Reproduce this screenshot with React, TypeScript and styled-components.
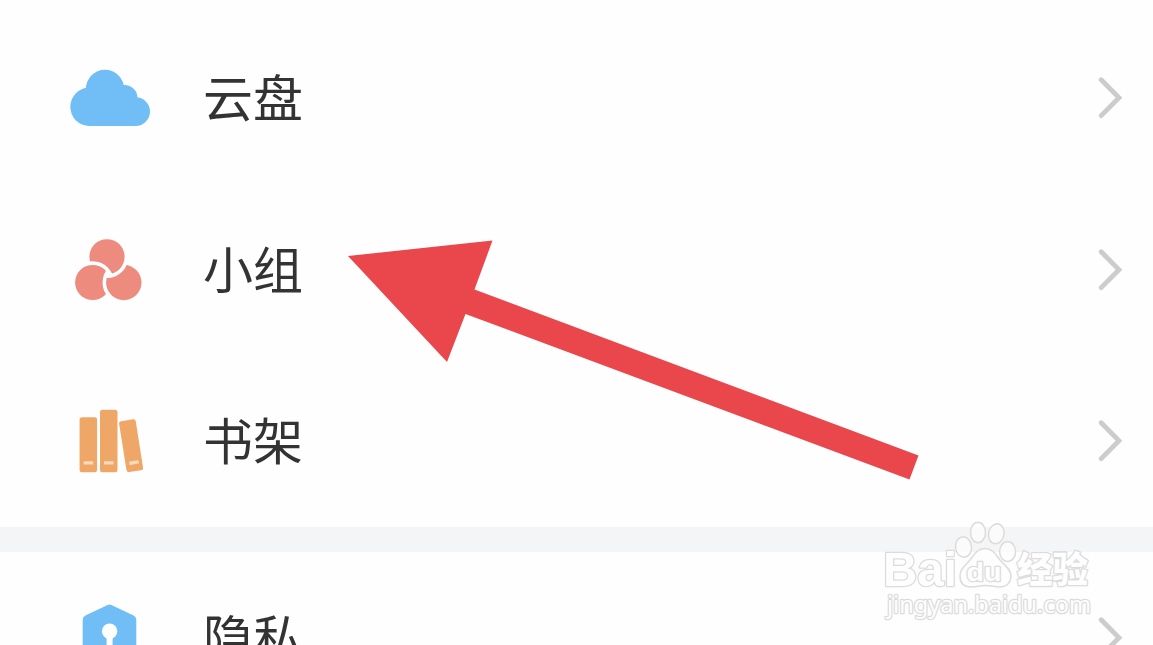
import { ReactNode } from 'react';
import styled, { createGlobalStyle } from 'styled-components';

const GlobalStyle = createGlobalStyle`
    body {
        margin: 0;
        background: #fefefe;
        overflow: hidden;
    }
`;

const Screen = styled.div`
    position: relative;
    box-sizing: border-box;
    height: 645px;
    padding-top: 12.5px;
    overflow: hidden;
    background: #fefefe;
    font-family: 'Noto Sans CJK SC', sans-serif;
`;

const Section = styled.section`
    display: flex;
    flex-direction: column;
`;

const Divider = styled.div`
    height: 25px;
    background: #f4f5f7;
`;

const Row = styled.div`
    display: flex;
    align-items: center;
    height: 171.5px;
    padding: 0 29px 0 60px;
    .label {
        flex: 1;
        margin-left: 43px;
        padding-bottom: 6px;
        color: #333;
        font-size: 50px;
        line-height: 72px;
    }
`;

const RowIcon = styled.svg`
    display: block;
    flex: none;
    width: 100px;
    height: 76.5px;
`;

const Chevron = styled.svg`
    display: block;
    flex: none;
    width: 26px;
    height: 44px;
`;

const Overlay = styled.svg`
    position: absolute;
    top: 0;
    left: 0;
    pointer-events: none;
`;

const WatermarkGroup = styled.g`
    fill: #fefefe;
    stroke: #dcdcdc;
    stroke-width: 2.6px;
    stroke-linejoin: round;
    paint-order: stroke;
    .latin {
        font: bold 49px 'Liberation Sans', sans-serif;
    }
    .du {
        font: bold 26px 'Liberation Sans', sans-serif;
    }
    .cjk {
        font: 900 36px 'Noto Sans CJK SC', sans-serif;
    }
    .url {
        font: 23.5px 'Noto Sans', sans-serif;
    }
`;

const CloudIcon = () => (
    <RowIcon viewBox="0 0 100 76.5" fill="#70bef5">
        <circle cx="29.5" cy="46.8" r="19.2" />
        <circle cx="45" cy="29" r="19.2" />
        <circle cx="64.5" cy="38" r="13" />
        <circle cx="75.6" cy="51.6" r="14.4" />
        <path d="M29.5 34H66L75.6 42V66H29.5Z" />
    </RowIcon>
);

const GroupIcon = () => (
    <RowIcon viewBox="0 0 100 76.5" fill="#ee8b7f">
        <defs>
            <mask id="cut-left">
                <rect width="100" height="77" fill="#fff" />
                <circle cx="32.7" cy="50.5" r="21.3" fill="#000" />
            </mask>
            <mask id="cut-top">
                <rect width="100" height="77" fill="#fff" />
                <circle cx="47" cy="24.8" r="21.3" fill="#000" />
            </mask>
            <mask id="cut-right">
                <rect width="100" height="77" fill="#fff" />
                <circle cx="63.8" cy="50.5" r="21.3" fill="#000" />
            </mask>
        </defs>
        <circle cx="47" cy="24.8" r="17.6" mask="url(#cut-left)" />
        <circle cx="63.8" cy="50.5" r="17.7" mask="url(#cut-top)" />
        <circle cx="32.7" cy="50.5" r="17.6" mask="url(#cut-right)" />
    </RowIcon>
);

const BooksIcon = () => (
    <RowIcon viewBox="0 0 100 76.5" fill="#efa768">
        <rect x="19.6" y="14.2" width="17.5" height="55" rx="2.5" />
        <rect x="40" y="6.8" width="17.5" height="62.4" rx="2.5" />
        <rect x="62.7" y="16.9" width="16.8" height="51.6" rx="2.5" transform="rotate(-9 71.1 42.7)" />
        <g fill="#f8d9bc">
            <rect x="23.6" y="58.2" width="9.6" height="3.4" rx="0.6" />
            <rect x="44" y="58.2" width="9.6" height="3.4" rx="0.6" />
            <rect x="69.2" y="57.9" width="9.6" height="3.4" rx="0.6" transform="rotate(-9 74 59.6)" />
        </g>
    </RowIcon>
);

const PrivacyIcon = () => (
    <RowIcon viewBox="0 0 100 76.5">
        <path
            fill="#70bef5"
            d="M47.6 5Q49.5 4 51.4 5L73.6 15.6Q76.3 17 76.3 20V55Q76.3 58 73.6 59.4L51.4 71Q49.5 72 47.6 71L25.4 59.4Q22.7 58 22.7 55V20Q22.7 17 25.4 15.6Z"
        />
        <circle cx="49.6" cy="31.3" r="7.7" fill="#fefefe" />
        <rect x="46.6" y="34" width="6" height="20" fill="#fefefe" />
    </RowIcon>
);

const MenuRow = (props: { icon: ReactNode; label: string }) => {
    const { icon, label } = props;
    return (
        <Row>
            {icon}
            <span className="label">{label}</span>
            <Chevron viewBox="0 0 26 44" fill="none" stroke="#ccc" strokeWidth="4.8" strokeLinecap="round">
                <path d="M3.2 3.8L21 21.7L3.2 39.6" />
            </Chevron>
        </Row>
    );
};

const Watermark = () => (
    <WatermarkGroup>
        <text className="latin" x="883" y="586" textLength="74" lengthAdjust="spacingAndGlyphs">
            Bai
        </text>
        <g fillOpacity="0.7" strokeWidth="1.5" style={{ paintOrder: 'normal' }}>
            <ellipse cx="963.5" cy="547" rx="8" ry="10.2" transform="rotate(-8 963.5 547)" />
            <ellipse cx="978" cy="532.5" rx="7.5" ry="10.3" />
            <ellipse cx="996.3" cy="533.8" rx="7.7" ry="10" transform="rotate(12 996.3 533.8)" />
            <ellipse cx="1007.6" cy="551.5" rx="8" ry="10" />
            <path
                fillOpacity="1"
                d="M985 548.5C977 548.5 974 555 970 560C965 566 960 569 960 576C960 583 964 587 971 587C977 587 980 585.5 985 585.5C991 585.5 995 587 1000 587C1007 587 1011 582 1011 576C1011 569 1005 566 1000 560C996 555 993 548.5 985 548.5Z"
            />
        </g>
        <text className="du" x="966.5" y="580.5" textLength="35" lengthAdjust="spacingAndGlyphs">
            du
        </text>
        <text className="cjk" x="1017" y="583" textLength="71" lengthAdjust="spacingAndGlyphs">
            经验
        </text>
        <text className="url" x="887" y="613" textLength="204" lengthAdjust="spacingAndGlyphs">
            jingyan.baidu.com
        </text>
    </WatermarkGroup>
);

const App = () => {
    return (
        <Screen>
            <GlobalStyle />
            <Section>
                <MenuRow icon={<CloudIcon />} label="云盘" />
                <MenuRow icon={<GroupIcon />} label="小组" />
                <MenuRow icon={<BooksIcon />} label="书架" />
            </Section>
            <Divider />
            <Section>
                <MenuRow icon={<PrivacyIcon />} label="隐私" />
            </Section>
            <Overlay width="1153" height="645" viewBox="0 0 1153 645">
                <path
                    fill="#e9474c"
                    d="M348 256L492.5 240.5L474.5 289.5L918.5 455.5L909.5 479.5L465.5 314L447 362Z"
                />
                <Watermark />
            </Overlay>
        </Screen>
    );
};

export default App;
